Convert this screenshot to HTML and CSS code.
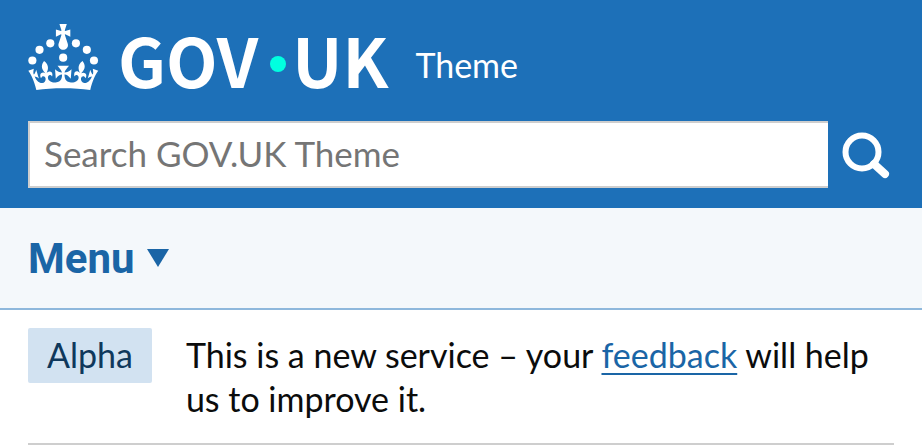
FILE: index.html
```html
<!DOCTYPE html>
<html lang="en">

<head>
    <meta charset="UTF-8">
    <meta name="viewport" content="width=device-width, initial-scale=1.0">
    <title>GOV.UK Theme</title>
    <link rel="stylesheet" href="styles.css">
</head>

<body>
    <header class="header">
        <div class="brand">
            <a class="logo" href="#" aria-label="GOV.UK">
                <svg class="crown" viewBox="0 0 64 60" aria-hidden="true">
                    <circle cx="20" cy="17.6" r="3.7"/>
                    <circle cx="10.2" cy="23.5" r="3.7"/>
                    <circle cx="3.7" cy="33.2" r="3.7"/>
                    <circle cx="31.7" cy="30.6" r="3.7"/>
                    <circle cx="43.3" cy="17.6" r="3.7"/>
                    <circle cx="53.2" cy="23.5" r="3.7"/>
                    <circle cx="59.7" cy="33.2" r="3.7"/>
                    <path d="M33.1,9.8c.2-.1.3-.3.5-.5l4.6,2.4v-6.8l-4.6,1.5c-.1-.2-.3-.3-.5-.5l1.9-5.9h-6.7l1.9,5.9c-.2.1-.3.3-.5.5l-4.6-1.5v6.8l4.6-2.4c.1.2.3.3.5.5l-2.6,8c-.9,2.8,1.2,5.7,4.1,5.7h0c3,0,5.1-2.9,4.1-5.7l-2.6-8ZM37,37.9s-3.4,3.8-4.1,6.1c2.2,0,4.2-.5,6.4-2.8l-.7,8.5c-2-2.8-4.4-4.1-5.7-3.8.1,3.1.5,6.7,5.8,7.2,3.7.3,6.7-1.5,7-3.8.4-2.6-2-4.3-3.7-1.6-1.4-4.5,2.4-6.1,4.9-3.2-1.9-4.5-1.8-7.7,2.4-10.9,3,4,2.6,7.3-1.2,11.1,2.4-1.3,6.2,0,4,4.6-1.2-2.8-3.7-2.2-4.2.2-.3,1.7.7,3.7,3,4.2,1.9.3,4.7-.9,7-5.9-1.3,0-2.4.7-3.9,1.7l2.4-8c.6,2.3,1.4,3.7,2.2,4.5.6-1.6.5-2.8,0-5.3l5,1.8c-2.6,3.6-5.2,8.7-7.3,17.5-7.4-1.1-15.7-1.7-24.5-1.7h0c-8.8,0-17.1.6-24.5,1.7-2.1-8.9-4.7-13.9-7.3-17.5l5-1.8c-.5,2.5-.6,3.7,0,5.3.8-.8,1.6-2.3,2.2-4.5l2.4,8c-1.5-1-2.6-1.7-3.9-1.7,2.3,5,5.2,6.2,7,5.9,2.3-.4,3.3-2.4,3-4.2-.5-2.4-3-3.1-4.2-.2-2.2-4.6,1.6-6,4-4.6-3.7-3.7-4.2-7.1-1.2-11.1,4.2,3.2,4.3,6.4,2.4,10.9,2.5-2.8,6.3-1.3,4.9,3.2-1.8-2.7-4.1-1-3.7,1.6.3,2.3,3.3,4.1,7,3.8,5.4-.5,5.7-4.2,5.8-7.2-1.3-.2-3.7,1-5.7,3.8l-.7-8.5c2.2,2.3,4.2,2.7,6.4,2.8-.7-2.3-4.1-6.1-4.1-6.1h10.6Z"/>
                </svg>
                <span class="wordmark">GOV<span class="dot"></span>UK</span>
            </a>
            <a class="product" href="#">Theme</a>
        </div>
        <form class="search" role="search">
            <input class="search__input" type="search" id="search" placeholder="Search GOV.UK Theme" aria-label="Search GOV.UK Theme">
            <button class="search__button" type="submit" aria-label="Search">
                <svg class="search__icon" viewBox="0 0 66 66" aria-hidden="true">
                    <circle cx="34" cy="30" r="16.5"/>
                    <path d="M46 42L57 52"/>
                </svg>
            </button>
        </form>
    </header>

    <nav class="nav">
        <button class="menu" type="button">Menu <span class="menu__arrow"></span></button>
    </nav>

    <div class="phase">
        <strong class="tag">Alpha</strong>
        <p class="phase__text">This is a new service – your <a class="link" href="#">feedback</a> will help us to improve it.</p>
    </div>
</body>

</html>
```

FILE: styles.css
```css
* {
  margin: 0;
  padding: 0;
  box-sizing: border-box;
}

body {
  font-family: Lato, sans-serif;
  font-size: 34px;
  line-height: 44px;
  color: #0b0c0c;
  background-color: #ffffff;
}

.header {
  padding: 24px 28px 20px;
  background-color: #1d70b8;
}

.brand {
  display: flex;
  align-items: center;
  gap: 27px;
  height: 66px;
  margin-bottom: 31px;
}

.logo {
  display: flex;
  align-items: center;
  gap: 19px;
  color: #ffffff;
  text-decoration: none;
}

.crown {
  width: 71px;
  height: 66px;
  fill: #ffffff;
}

.wordmark {
  display: flex;
  align-items: center;
  height: 66px;
  padding-top: 4px;
  font-family: "Noto Sans CJK JP", sans-serif;
  font-size: 67px;
  font-weight: bold;
  line-height: 44px;
}

.dot {
  width: 16px;
  height: 16px;
  margin: 10px 6px 0 12px;
  border-radius: 50%;
  background-color: #00ffe0;
}

.product {
  padding-top: 16px;
  color: #ffffff;
  text-decoration: none;
}

.search {
  display: flex;
  height: 67px;
}

.search__input {
  flex: 1;
  min-width: 0;
  padding: 0 14px 4px;
  border: 2px solid #cecece;
  border-right: none;
  border-radius: 0;
  background-color: #ffffff;
  font: inherit;
  font-size: 35px;
  color: #0b0c0c;
  appearance: none;
}

.search__input::placeholder {
  color: #757575;
}

.search__button {
  width: 66px;
  border: none;
  background-color: transparent;
  cursor: pointer;
}

.search__icon {
  display: block;
  width: 66px;
  height: 66px;
  fill: none;
  stroke: #ffffff;
  stroke-width: 6;
}

.search__icon path {
  stroke-width: 8;
  stroke-linecap: round;
}

.nav {
  padding: 0 28px;
  border-bottom: 2px solid #8eb8dc;
  background-color: #f4f8fb;
}

.menu {
  display: flex;
  align-items: center;
  gap: 12px;
  height: 100px;
  border: none;
  background-color: transparent;
  font-family: Roboto, sans-serif;
  font-size: 42px;
  font-weight: bold;
  color: #1a65a6;
  cursor: pointer;
}

.menu__arrow {
  border: 11px solid transparent;
  border-top: 18px solid #1a65a6;
  border-bottom: none;
}

.phase {
  display: flex;
  align-items: flex-start;
  gap: 34px;
  margin: 0 28px;
  padding: 18px 0 22px;
  border-bottom: 2px solid #cecece;
}

.tag {
  padding: 5px 19px 6px;
  border-radius: 2px;
  background-color: #d2e2f1;
  color: #0f385c;
  font-weight: normal;
}

.phase__text {
  padding-top: 5px;
}

.link {
  color: #1a65a6;
  text-decoration: underline;
  text-decoration-thickness: 2px;
  text-underline-offset: 5px;
  text-decoration-skip-ink: none;
}
```
